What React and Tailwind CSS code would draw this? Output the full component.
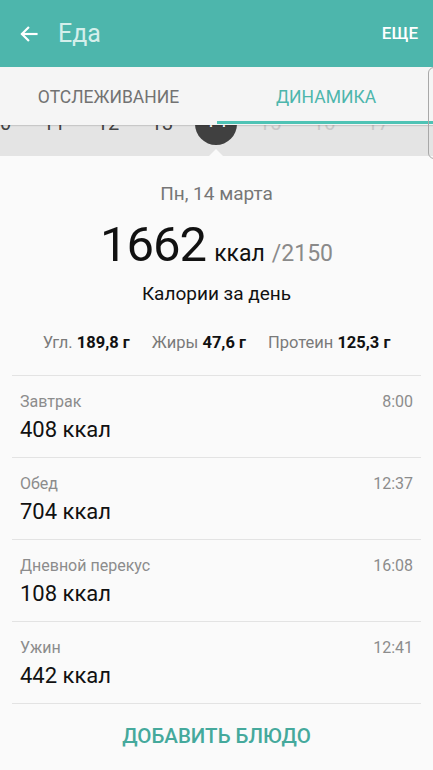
import React from 'react';

const days = [
  { n: '10', tone: 'past' },
  { n: '11', tone: 'past' },
  { n: '12', tone: 'past' },
  { n: '13', tone: 'past' },
  { n: '14', tone: 'today' },
  { n: '15', tone: 'future' },
  { n: '16', tone: 'future' },
  { n: '17', tone: 'future' },
];

const meals = [
  { name: 'Завтрак', kcal: '408 ккал', time: '8:00' },
  { name: 'Обед', kcal: '704 ккал', time: '12:37' },
  { name: 'Дневной перекус', kcal: '108 ккал', time: '16:08' },
  { name: 'Ужин', kcal: '442 ккал', time: '12:41' },
];

function BackArrow() {
  return (
    <svg width="20" height="20" viewBox="0 0 24 24" fill="none" stroke="white" strokeWidth="2.6" strokeLinecap="square">
      <path d="M21 12H4" />
      <path d="M11 4.5L3.5 12l7.5 7.5" />
    </svg>
  );
}

export default function App() {
  return (
    <div
      className="relative h-[770px] w-[433px] overflow-hidden bg-[#fafafa]"
      style={{ fontFamily: 'Roboto, "Noto Sans", sans-serif' }}
    >
      {/* app bar */}
      <header className="flex h-[67px] items-center bg-[#4db6ac] pl-[19px] pr-[15px]">
        <BackArrow />
        <span className="ml-[19px] text-[25px] text-[#d4efeb]">Еда</span>
        <span className="ml-auto text-[17px] font-medium text-white">ЕЩЕ</span>
      </header>

      {/* tabs */}
      <div className="relative z-10 flex h-[58px] bg-[#f5f5f5] shadow-[0_1px_1px_rgba(0,0,0,0.12)]">
        <div className="flex w-[217px] items-center justify-center pt-[2px] text-[17.5px] text-[#727272]">ОТСЛЕЖИВАНИЕ</div>
        <div className="relative flex flex-1 items-center justify-center pl-[2px] pt-[2px] text-[17.5px] text-[#4db6ac]">
          ДИНАМИКА
          <div className="absolute bottom-[1px] left-0 right-0 h-[3px] bg-[#4fc3b5]" />
        </div>
      </div>

      {/* date strip, partly hidden under the tabs */}
      <div className="relative -mt-[35px] h-[66px] bg-[#e4e4e4]">
        <div className="-ml-[27px] flex pt-[13px]">
          {days.map((d) => (
            <div key={d.n} className="flex w-[54px] shrink-0 justify-center">
              {d.tone === 'today' ? (
                <div className="flex h-[42px] w-[42px] items-center justify-center rounded-full bg-[#404040] pb-[9px] text-[20px] text-white">
                  {d.n}
                </div>
              ) : (
                <div
                  className={
                    'pt-[10px] text-[20px] leading-none ' +
                    (d.tone === 'past' ? 'text-[#444444]' : 'text-[#c8c8c8]')
                  }
                >
                  {d.n}
                </div>
              )}
            </div>
          ))}
        </div>
        <div className="absolute bottom-0 left-[209px] h-0 w-0 border-x-[7px] border-b-[7px] border-x-transparent border-b-[#fafafa]" />
      </div>

      {/* peeking panel edge on the right */}
      <div className="absolute left-[428px] top-[67px] z-20 h-[92px] w-[12px] rounded-l-[6px] border border-[#a8a8a8]" />

      {/* summary */}
      <div className="flex flex-col items-center pt-[26px]">
        <div className="text-[19px] leading-[24px] text-[#767676]">Пн, 14 марта</div>
        <div className="mt-[14px] flex items-baseline leading-none">
          <span className="text-[49px] tracking-[-1px] text-[#111111]">1662</span>
          <span className="ml-[8px] text-[23px] text-[#111111]">ккал</span>
          <span className="ml-[7px] text-[23px] text-[#8a8a8a]">/2150</span>
        </div>
        <div className="mt-[13px] text-[19px] leading-[24px] text-[#111111]">Калории за день</div>
        <div className="mt-[27px] flex gap-[22px] text-[16.5px] leading-[20px]">
          <span className="text-[#7a7a7a]">
            Угл. <b className="font-bold text-[#111111]">189,8 г</b>
          </span>
          <span className="text-[#7a7a7a]">
            Жиры <b className="font-bold text-[#111111]">47,6 г</b>
          </span>
          <span className="text-[#7a7a7a]">
            Протеин <b className="font-bold text-[#111111]">125,3 г</b>
          </span>
        </div>
      </div>

      {/* meals */}
      <ul className="mx-[12px] mt-[22px] border-t border-[#e3e3e3]">
        {meals.map((m) => (
          <li key={m.name} className="border-b border-[#e3e3e3] px-[8px] pb-[13px] pt-[16px]">
            <div className="flex justify-between text-[16px] leading-[20px] text-[#8c8c8c]">
              <span>{m.name}</span>
              <span>{m.time}</span>
            </div>
            <div className="mt-[4px] text-[22px] leading-[28px] text-[#111111]">{m.kcal}</div>
          </li>
        ))}
      </ul>

      <div className="mt-[20px] text-center text-[20.5px] font-medium leading-[24px] text-[#45a99c]">
        ДОБАВИТЬ БЛЮДО
      </div>
    </div>
  );
}
